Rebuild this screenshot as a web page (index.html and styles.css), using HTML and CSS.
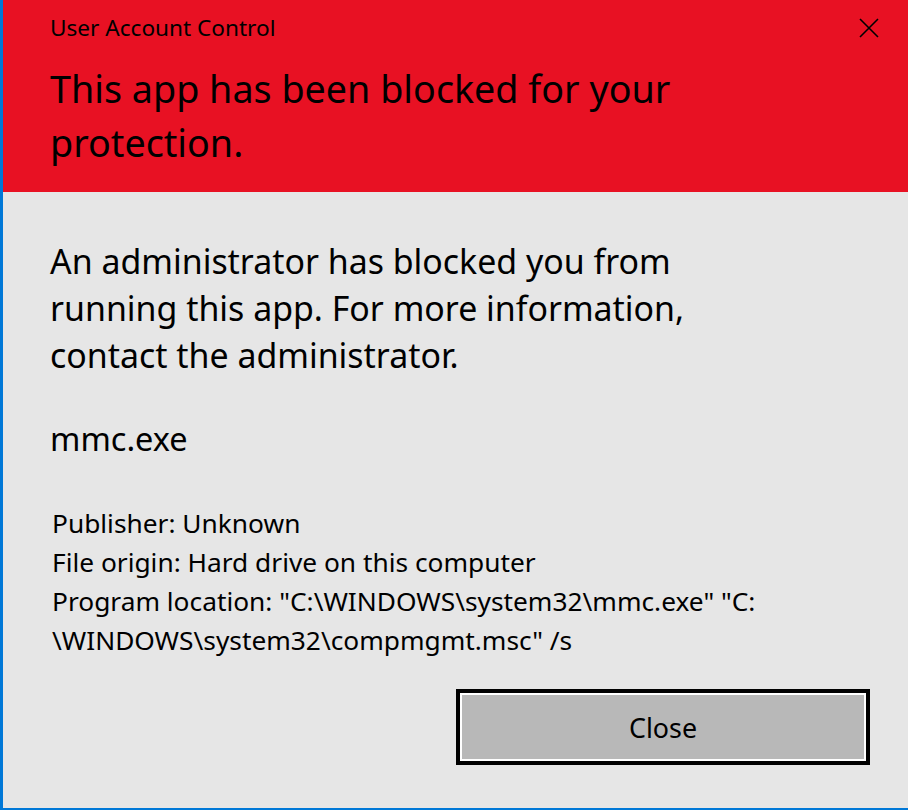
FILE: index.html
```html
<!DOCTYPE html>
<html>
<head>
<meta charset="utf-8">
<link rel="stylesheet" href="styles.css">
</head>
<body>
<div class="window">
  <header class="header">
    <div class="titlebar">
      <span class="caption">User Account Control</span>
      <button class="x" aria-label="Close">
        <svg width="20" height="20" viewBox="0 0 20 20"><path d="M1 1L19 19M19 1L1 19" stroke="#000" stroke-width="1.6" fill="none"/></svg>
      </button>
    </div>
    <h1 class="title">This app has been blocked for your protection.</h1>
  </header>
  <main class="content">
    <p class="message">An administrator has blocked you from running this app. For more information, contact the administrator.</p>
    <p class="app">mmc.exe</p>
    <div class="details">
      <div>Publisher: Unknown</div>
      <div>File origin: Hard drive on this computer</div>
      <div>Program location: "C:\WINDOWS\system32\mmc.exe" "C:<br>\WINDOWS\system32\compmgmt.msc" /s</div>
    </div>
    <div class="actions">
      <button class="btn">Close</button>
    </div>
  </main>
</div>
</body>
</html>
```
FILE: styles.css
```css
html, body {
  margin: 0;
  padding: 0;
  height: 100%;
}
body {
  font-family: "Noto Sans", "Open Sans", sans-serif;
  color: #000;
  background: #e6e6e6;
}
.window {
  box-sizing: border-box;
  height: 810px;
  border-left: 3px solid #0078d7;
  border-bottom: 2px solid #0078d7;
  background: #e6e6e6;
  display: flex;
  flex-direction: column;
}
.header {
  background: #e81123;
  height: 192px;
  box-sizing: border-box;
  padding: 0 0 0 47px;
}
.titlebar {
  display: flex;
  justify-content: space-between;
  align-items: flex-start;
  height: 60px;
}
.caption {
  font-size: 22.6px;
  line-height: 22px;
  margin-top: 17px;
}
.x {
  background: none;
  border: 0;
  padding: 0;
  margin: 18px 29px 0 0;
  width: 20px;
  height: 20px;
  display: block;
}
.x svg { display: block; }
.title {
  margin: 0;
  font-weight: 400;
  font-size: 37.7px;
  line-height: 54px;
  width: 700px;
  margin-top: 2px;
}
.content {
  padding: 0 0 0 47px;
  flex: 1;
}
.message {
  margin: 46px 0 0;
  font-size: 33.9px;
  line-height: 47px;
  width: 680px;
}
.app {
  margin: 40px 0 0;
  font-size: 32.5px;
  line-height: 40px;
}
.details {
  margin-top: 45px;
  padding-left: 2px;
  font-size: 26.3px;
  line-height: 39px;
  white-space: nowrap;
}
.actions {
  display: flex;
  justify-content: flex-end;
  padding-right: 38px;
  margin-top: 29px;
}
.btn {
  width: 414px;
  height: 76px;
  box-sizing: border-box;
  border: 4px solid #000;
  background: #b8b8b8;
  box-shadow: inset 0 0 0 2px #fff;
  font-family: inherit;
  font-size: 26.8px;
  color: #000;
  padding: 0;
}
```
